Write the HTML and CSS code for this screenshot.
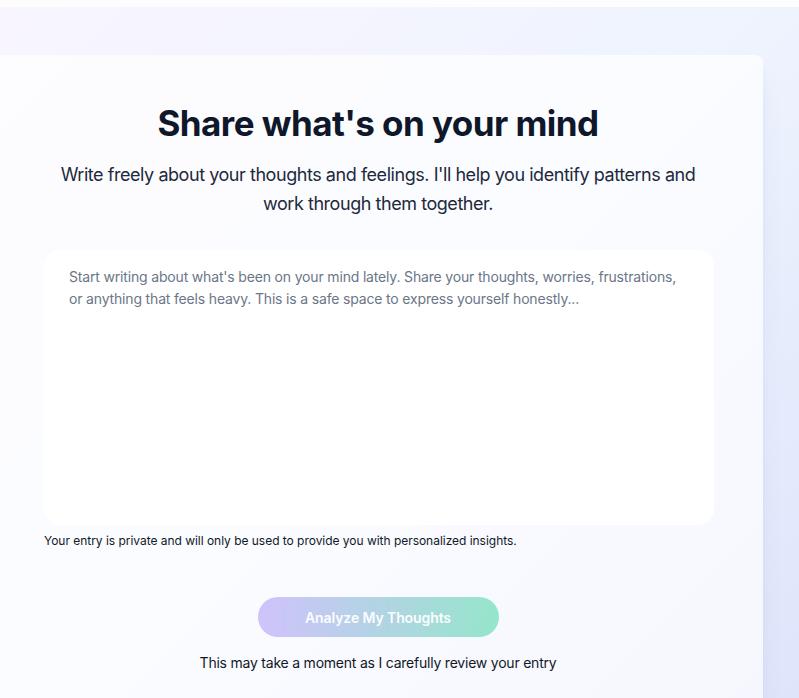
FILE: index.html
```html
<!DOCTYPE html>
<html lang="en">
<head>
<meta charset="utf-8">
<title>Share what's on your mind</title>
<link rel="stylesheet" href="styles.css">
</head>
<body>
<div class="topbar"></div>
<main class="page">
  <section class="card">
    <h1 class="title">Share what's on your mind</h1>
    <p class="subtitle">Write freely about your thoughts and feelings. I'll help you identify patterns and work through them together.</p>
    <div class="entry">
      <textarea class="entry-input" placeholder="Start writing about what's been on your mind lately. Share your thoughts, worries, frustrations, or anything that feels heavy. This is a safe space to express yourself honestly..."></textarea>
      <p class="note">Your entry is private and will only be used to provide you with personalized insights.</p>
    </div>
    <div class="actions">
      <button class="analyze" disabled>Analyze My Thoughts</button>
      <p class="hint">This may take a moment as I carefully review your entry</p>
    </div>
  </section>
</main>
</body>
</html>
```

FILE: styles.css
```css
* { box-sizing: border-box; }
html, body { margin: 0; padding: 0; }
body {
  font-family: Inter, "Noto Sans", sans-serif;
  background: #fdfdfe;
  overflow: hidden;
  height: 698px;
}
.topbar {
  height: 7px;
  background: #fdfdfe;
}
.page {
  height: 691px;
  padding-top: 48px;
  background: linear-gradient(135deg, #f8f5ff 0%, #eff4fe 50%, #dfe4fb 100%);
}
.card {
  width: 770px;
  margin-left: -7px;
  padding: 48px 51px 40px;
  border-radius: 8px;
  background: rgba(255, 255, 255, 0.7);
  box-shadow: 0 20px 25px -5px rgba(99, 102, 160, 0.12), 0 8px 10px -6px rgba(99, 102, 160, 0.1);
  display: flex;
  flex-direction: column;
  align-items: center;
}
.title {
  margin: 0 0 17px;
  font-size: 35px;
  line-height: 40px;
  font-weight: 700;
  color: #0f172a;
  letter-spacing: -0.55px;
}
.subtitle {
  margin: 0 0 32px;
  max-width: 672px;
  text-align: center;
  font-size: 18px;
  line-height: 29px;
  color: #1e293b;
  letter-spacing: -0.45px;
}
.entry {
  width: 670px;
  margin-left: 2px;
}
.entry-input {
  display: block;
  width: 100%;
  height: 275px;
  padding: 16px 28px 16px 25px;
  border: none;
  border-radius: 16px;
  background: #ffffff;
  font-family: inherit;
  font-size: 14px;
  line-height: 22px;
  letter-spacing: -0.17px;
  color: #1e293b;
  resize: none;
  outline: none;
}
.entry-input::placeholder {
  color: #6b7688;
}
.note {
  margin: 8px 0 0;
  font-size: 12px;
  line-height: 16px;
  letter-spacing: -0.03px;
  color: #111827;
}
.actions {
  margin-top: 48px;
  display: flex;
  flex-direction: column;
  align-items: center;
}
.analyze {
  width: 241px;
  height: 40px;
  border: none;
  border-radius: 999px;
  background: linear-gradient(90deg, #a78bfa, #34d399);
  opacity: 0.5;
  color: #ffffff;
  font-family: inherit;
  font-size: 14px;
  font-weight: 600;
  letter-spacing: -0.1px;
}
.hint {
  margin: 16px 0 0;
  font-size: 14px;
  line-height: 20px;
  letter-spacing: -0.22px;
  color: #111827;
}
```
